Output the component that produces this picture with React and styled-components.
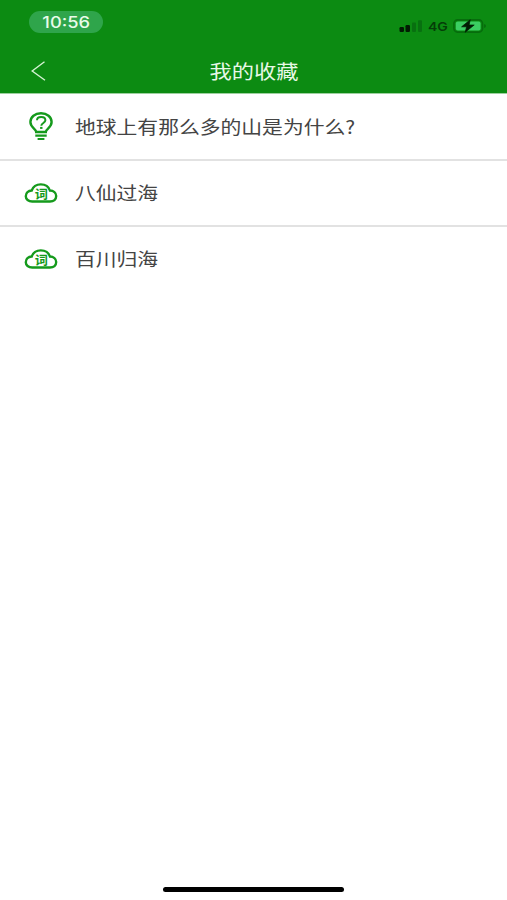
import React from 'react'
import styled, {createGlobalStyle} from 'styled-components'

const GREEN = '#0c8b12'

const GlobalStyle = createGlobalStyle`
  body {
    margin: 0;
    background: #fff;
    font-family: "Liberation Sans", "Noto Sans CJK SC", sans-serif;
  }
`

const Screen = styled.div`
  display: flex;
  flex-direction: column;
  width: 507px;
  height: 900px;
  overflow: hidden;
  background: #fff;
`

const Header = styled.header`
  height: 93px;
  flex: none;
  background: ${GREEN};
  border-bottom: 1px solid #9dd09f;
`

const StatusBar = styled.div`
  display: flex;
  justify-content: space-between;
  height: 48px;
  box-sizing: border-box;
  padding: 11px 20px 0 29px;
`

const TimePill = styled.div`
  display: flex;
  align-items: center;
  justify-content: center;
  width: 74px;
  height: 22px;
  border-radius: 11px;
  background: #2fa54b;
`

const Stretch = styled.span`
  display: inline-block;
  white-space: nowrap;
  transform: scaleX(${props => props.ratio});
  transform-origin: ${props => props.origin || 'left'} center;
`

const Time = styled(Stretch)`
  padding-top: 1px;
  color: #e9fbe9;
  font-family: Inter, "Liberation Sans", sans-serif;
  font-size: 15.5px;
  font-weight: 500;
  line-height: 22px;
`

const Indicators = styled.div`
  display: flex;
  align-items: center;
  height: 14px;
  margin-top: 8px;
`

const Network = styled(Stretch)`
  width: 20px;
  margin: 1px 5px 0 5px;
  color: #053d08;
  font-family: Inter, "Liberation Sans", sans-serif;
  font-size: 12px;
  font-weight: 600;
  line-height: 14px;
`

const NavBar = styled.nav`
  display: grid;
  grid-template-columns: 60px 1fr 58px;
  align-items: center;
  height: 45px;
`

const BackButton = styled.button`
  display: flex;
  padding: 0 0 0 31px;
  border: 0;
  background: none;
`

const Title = styled.h1`
  margin: 0;
  color: #e8f8e6;
  font-family: "Noto Sans CJK SC", sans-serif;
  font-size: 19px;
  font-weight: 400;
  line-height: 45px;
  text-align: center;
`

const List = styled.ul`
  flex: 1;
  margin: 0;
  padding: 1px 0 0;
  list-style: none;
`

const Row = styled.li`
  display: flex;
  align-items: center;
  height: 66px;
  box-sizing: border-box;
  padding: 0 0 1px 24px;
  border-bottom: 2px solid ${props => props.last ? 'transparent' : '#e2e2e2'};
`

const RowIcon = styled.div`
  display: flex;
  justify-content: center;
  width: 34px;
  margin-right: 17px;
`

const RowText = styled(Stretch)`
  padding-bottom: 2px;
  color: #444;
  font-family: "Noto Sans CJK SC", sans-serif;
  font-size: 18px;
  line-height: 26px;
`

const HomeArea = styled.footer`
  display: flex;
  justify-content: center;
  height: 13px;
`

const HomeBar = styled.div`
  width: 181px;
  height: 5px;
  border-radius: 3px;
  background: #000;
`

const SignalIcon = () => (
  <svg width="24" height="14" viewBox="0 0 24 14">
    <rect x="0.5" y="8" width="4.5" height="5" rx="1.2" fill="#021c03" />
    <rect x="6.5" y="6" width="4.5" height="7" rx="1.2" fill="#021c03" />
    <rect x="13" y="3.5" width="4" height="9.5" rx="1" fill="#087010" />
    <rect x="19" y="1.3" width="4" height="11.7" rx="1" fill="#087010" />
  </svg>
)

const BatteryIcon = () => (
  <svg width="34" height="14" viewBox="0 0 34 14">
    <rect x="0.9" y="0.9" width="28.6" height="12.2" rx="3.6" fill="none" stroke="#076c0d" strokeWidth="1.6" />
    <rect x="2.8" y="2.4" width="24.8" height="9.2" rx="2" fill="#3bce62" />
    <path d="M31 5Q33 5.7 33 7Q33 8.3 31 9Z" fill="#076c0d" />
    <path d="M17.2 0.8L8.6 7.8H13.6L12.2 13.2L21.2 6H16.1Z" fill="#021c03" stroke="#021c03" strokeWidth="0.7" strokeLinejoin="round" />
  </svg>
)

const BackIcon = () => (
  <svg width="15" height="20" viewBox="0 0 15 20" fill="none" stroke="#d5f2d3" strokeWidth="1.4">
    <path d="M13.5 0.8L1.2 10L14 19.2" />
  </svg>
)

const BulbIcon = () => (
  <svg width="24" height="30" viewBox="0 0 24 30" fill="none" stroke="#159a1c" strokeWidth="2.4">
    <path d="M7.2 20C7.2 16.9 1.4 15.8 1.4 10.1C1.4 5 6 1.3 12 1.3S22.6 5 22.6 10.1C22.6 15.8 16.8 16.9 16.8 20Z" />
    <path d="M8 8.3C8 6.3 9.7 5 12.2 5C14.7 5 16.4 6.3 16.4 8.3C16.4 10.9 12.3 11.1 12.3 13.8" strokeWidth="2" />
    <path d="M11.1 15.9H13.5" strokeWidth="2" />
    <path d="M6.3 23.6H17.7M8.6 27H15.4" strokeWidth="2.1" />
  </svg>
)

const CloudWordIcon = () => (
  <svg width="34" height="20" viewBox="0 0 34 20">
    <path
      d="M8.2 18.5C4.4 18.5 1.8 16.2 1.8 13.2C1.8 10 4.4 7.7 7.7 7.5C9.1 3.7 12.5 1.4 16.8 1.4C21.3 1.4 24.7 3.8 25.9 7.5C29.5 7.6 32.2 9.9 32.2 13.1C32.2 16.3 29.8 18.5 26 18.5Z"
      fill="none"
      stroke="#159a1c"
      strokeWidth="2.4"
    />
    <text
      transform="translate(10.7 15.6) scale(1.1 1)"
      fill="#159a1c"
      fontFamily="'Noto Sans CJK SC', sans-serif"
      fontSize="12"
      fontWeight="700"
    >
      词
    </text>
  </svg>
)

const icons = {
  question: BulbIcon,
  word: CloudWordIcon,
}

const favorites = [
  {type: 'question', text: '地球上有那么多的山是为什么?'},
  {type: 'word', text: '八仙过海'},
  {type: 'word', text: '百川归海'},
]

const App = () => (
  <React.Fragment>
    <GlobalStyle />
    <Screen>
      <Header>
        <StatusBar>
          <TimePill>
            <Time ratio={1.18} origin="center">10:56</Time>
          </TimePill>
          <Indicators>
            <SignalIcon />
            <Network ratio={1.17}>4G</Network>
            <BatteryIcon />
          </Indicators>
        </StatusBar>
        <NavBar>
          <BackButton aria-label="返回">
            <BackIcon />
          </BackButton>
          <Title>
            <Stretch ratio={1.17} origin="center">我的收藏</Stretch>
          </Title>
        </NavBar>
      </Header>
      <List>
        {favorites.map((item, index) => {
          const Icon = icons[item.type]
          return (
            <Row key={item.text} last={index === favorites.length - 1}>
              <RowIcon>
                <Icon />
              </RowIcon>
              <RowText ratio={1.155}>{item.text}</RowText>
            </Row>
          )
        })}
      </List>
      <HomeArea>
        <HomeBar />
      </HomeArea>
    </Screen>
  </React.Fragment>
)

export default App
